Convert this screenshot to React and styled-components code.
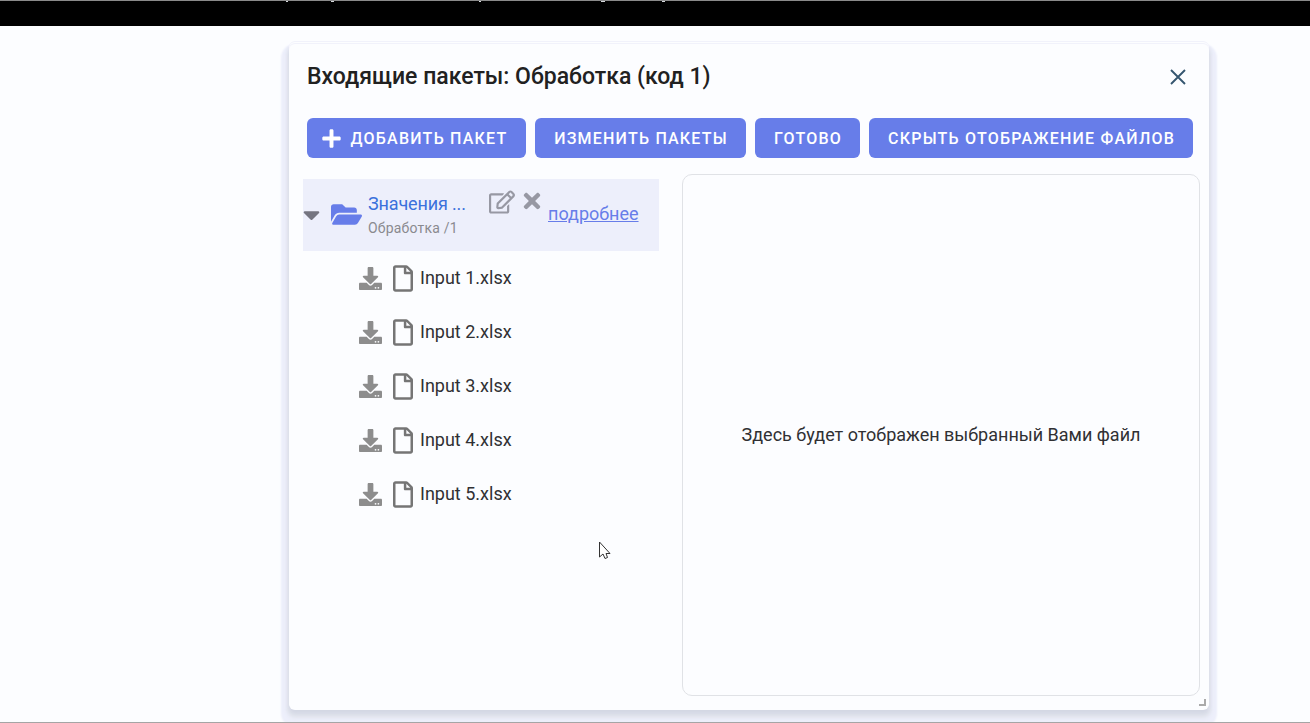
import React from "react";
import styled, { createGlobalStyle } from "styled-components";
import { FaPlus, FaCaretDown, FaFolderOpen, FaRegEdit, FaTimes, FaDownload, FaRegFile } from "react-icons/fa";

const GlobalStyle = createGlobalStyle`
  *, *::before, *::after { box-sizing: border-box; }
  body { margin: 0; background: #fcfdff; font-family: Roboto, "Liberation Sans", sans-serif; color: #303033; overflow: hidden; }
  svg { display: block; flex: none; }
`;

const Page = styled.div`
  height: 723px;
  display: flex;
  flex-direction: column;
  overflow: hidden;
  border-top: 1px solid #8a8a8a;
  border-bottom: 1px solid #a5a5a5;
`;

const TopBar = styled.header`
  height: 25px;
  flex: none;
  background: #000;
`;

const Stage = styled.main`
  flex: 1;
  min-height: 0;
  padding: 17px 0 0 289px;
`;

const Dialog = styled.section`
  position: relative;
  width: 920px;
  height: 667px;
  padding: 0 9px 15px 14px;
  display: flex;
  flex-direction: column;
  border-radius: 6px;
  background: #fcfdff;
  box-shadow: inset 0 1px 0 #f1f2fb, 0 -1px 0 #fcfdff, 0 -2px 0 #f1f2fb,
    0 4px 4px 0 #d3d7e4, 0 6px 4px 2px #e2e5ed, 0 9px 2px 8px #edeffb;
`;

const DialogHeader = styled.div`
  height: 75px;
  flex: none;
  padding: 0 12px 8px 4px;
  display: flex;
  align-items: center;
  justify-content: space-between;
`;

const Title = styled.h1`
  margin: 0;
  font-size: 23px;
  line-height: 32px;
  font-weight: 500;
  color: #212121;
`;

const CloseButton = styled.button`
  width: 20px;
  height: 20px;
  padding: 2px;
  border: 0;
  background: none;
  color: #35566f;
`;

const Toolbar = styled.div`
  display: flex;
  gap: 9px;
  padding-left: 4px;
`;

const Button = styled.button`
  width: ${(p) => p.$width}px;
  height: 40px;
  padding: ${(p) => (p.$withIcon ? "0 5px 0 0" : "1px 0 0 1px")};
  flex: none;
  display: flex;
  align-items: center;
  justify-content: center;
  gap: 9px;
  border: 0;
  border-radius: 6px;
  background: #677de9;
  color: #fff;
  font: 500 16px/20px Roboto, sans-serif;
  letter-spacing: 1.22px;
  text-transform: uppercase;
  white-space: nowrap;
`;

const ButtonLabel = styled.span`
  padding-top: 1px;
`;

const Content = styled.div`
  flex: 1;
  min-height: 0;
  margin-top: 16px;
  display: flex;
  justify-content: space-between;
`;

const Tree = styled.div`
  width: 356px;
  padding-top: 5px;
`;

const PackageRow = styled.div`
  height: 72px;
  display: flex;
  background: #edeffb;
`;

const Caret = styled.span`
  width: 28px;
  padding-top: 22px;
  color: #757580;

  svg { margin-left: -5px; }
`;

const Folder = styled.span`
  width: 37px;
  padding-top: 20px;
  color: #677de9;
`;

const PackageName = styled.div`
  width: 121px;
  padding-top: 13px;
`;

const PackageTitle = styled.div`
  font-size: 18px;
  line-height: 24px;
  letter-spacing: -0.15px;
  color: #3b71dc;
`;

const PackageNote = styled.div`
  margin-top: 4px;
  font-size: 14px;
  line-height: 16px;
  letter-spacing: 0.2px;
  color: #8a8a8f;
`;

const RowActions = styled.div`
  width: 59px;
  padding-top: 10px;
  display: flex;
  gap: 5px;
  color: #9798a3;
`;

const Details = styled.a`
  padding-top: 23px;
  font-size: 18px;
  line-height: 24px;
  color: #677de9;
  text-decoration: underline;
`;

const FileRow = styled.div`
  height: 54px;
  padding-left: 56px;
  display: flex;
  align-items: center;
  font-size: 18px;
`;

const FileName = styled.span`
  padding-bottom: 2px;
`;

const DownloadIcon = styled(FaDownload)`
  margin-right: 11px;
  color: #8d8d8d;
`;

const FileIcon = styled(FaRegFile)`
  width: 20px;
  margin: 1px 7px 0 0;
  color: #757575;
`;

const Preview = styled.div`
  width: 518px;
  height: 522px;
  padding-bottom: 2px;
  display: flex;
  align-items: center;
  justify-content: center;
  border: 1px solid #e0e2e6;
  border-radius: 10px;
  font-size: 18px;
`;

const ResizeHandle = styled.span`
  position: absolute;
  right: 3px;
  bottom: 4px;
  width: 7px;
  height: 7px;
  border: solid #aaa;
  border-width: 0 2px 2px 0;
`;

const Cursor = styled.svg`
  position: absolute;
  left: 599px;
  top: 541px;
`;

const files = ["Input 1.xlsx", "Input 2.xlsx", "Input 3.xlsx", "Input 4.xlsx", "Input 5.xlsx"];

export default function App() {
  return (
    <Page>
      <GlobalStyle />
      <TopBar>
        <svg width="1310" height="2" viewBox="0 0 1310 2" fill="#d5d8dc">
          <path d="M286 0h2v1h-2zM331 0h3v1h-3zM479 0h2v1h-2zM601 0h4v1h-4zM662 0h3v1h-3z" />
        </svg>
      </TopBar>
      <Stage>
        <Dialog>
          <DialogHeader>
            <Title>Входящие пакеты: Обработка (код 1)</Title>
            <CloseButton aria-label="Закрыть">
              <svg width="16" height="16" viewBox="0 0 16 16" fill="none" stroke="currentColor" strokeWidth="1.9">
                <path d="M1 1L15 15M15 1L1 15" />
              </svg>
            </CloseButton>
          </DialogHeader>
          <Toolbar>
            <Button $width={219} $withIcon><FaPlus size={21} /><ButtonLabel>Добавить пакет</ButtonLabel></Button>
            <Button $width={211}><ButtonLabel>Изменить пакеты</ButtonLabel></Button>
            <Button $width={105}><ButtonLabel>Готово</ButtonLabel></Button>
            <Button $width={324}><ButtonLabel>Скрыть отображение файлов</ButtonLabel></Button>
          </Toolbar>
          <Content>
            <Tree>
              <PackageRow>
                <Caret><FaCaretDown size={27} /></Caret>
                <Folder><FaFolderOpen size={31} /></Folder>
                <PackageName>
                  <PackageTitle>Значения ...</PackageTitle>
                  <PackageNote>Обработка /1</PackageNote>
                </PackageName>
                <RowActions>
                  <FaRegEdit size={26} />
                  <FaTimes size={24} />
                </RowActions>
                <Details>подробнее</Details>
              </PackageRow>
              {files.map((name) => (
                <FileRow key={name}>
                  <DownloadIcon size={23} />
                  <FileIcon size={27} />
                  <FileName>{name}</FileName>
                </FileRow>
              ))}
            </Tree>
            <Preview>Здесь будет отображен выбранный Вами файл</Preview>
          </Content>
          <ResizeHandle />
        </Dialog>
      </Stage>
      <Cursor width="13" height="20" viewBox="0 0 13 20">
        <path d="M0.5 1V16L4 13L6 17.5L8.5 16.5L7 12.5H11Z" fill="#fff" stroke="#333" strokeWidth="1" />
      </Cursor>
    </Page>
  );
}
